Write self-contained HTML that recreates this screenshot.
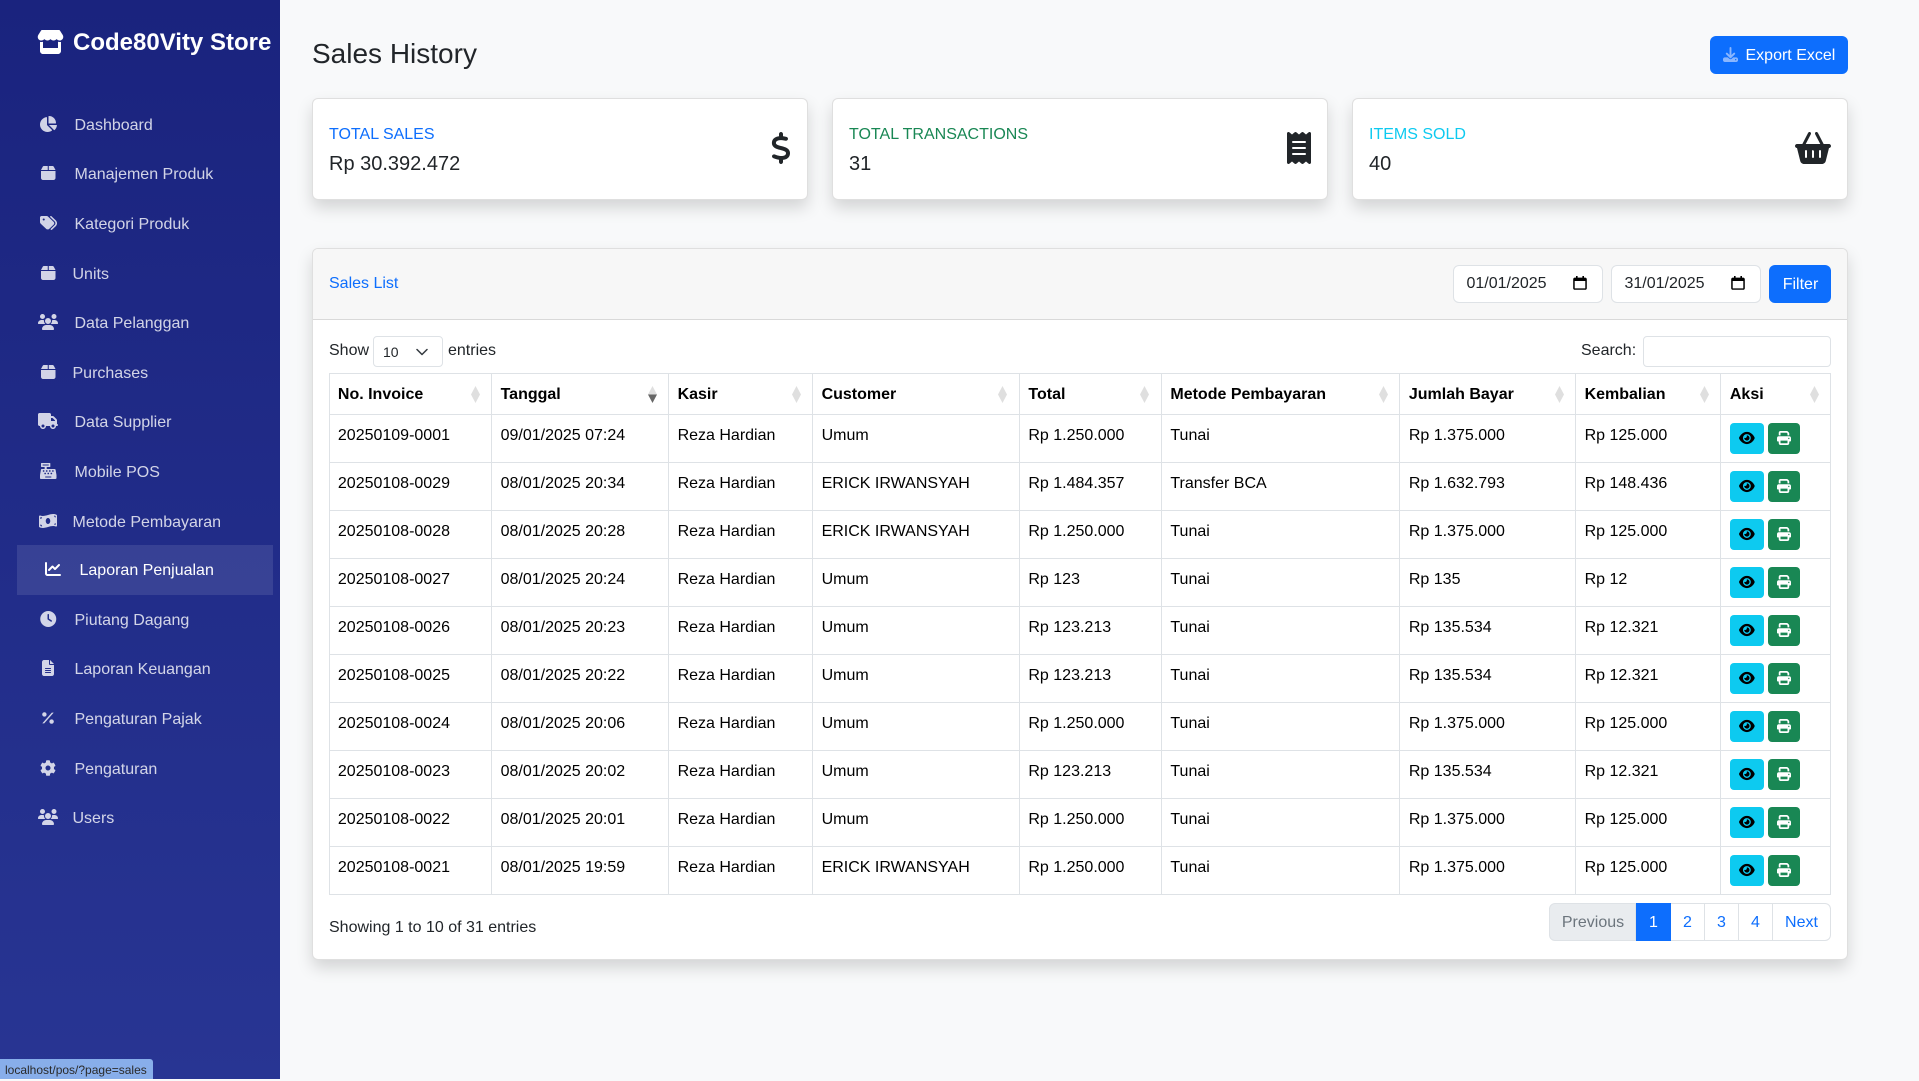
<!DOCTYPE html>
<html lang="id">
<head>
<meta charset="utf-8">
<title>Sales History</title>
<style>
*{box-sizing:border-box}
html,body{margin:0;padding:0;width:1919px;height:1079px;overflow:hidden;background:#f8f9fa;font-family:"Liberation Sans",Arial,sans-serif;font-size:16px;color:#212529}
.abs,.side a,.side svg,.t{position:absolute}
.t{white-space:nowrap;line-height:24px}
.side{position:absolute;left:0;top:0;width:280px;height:1079px;background:linear-gradient(180deg,#1a237e,#283593)}
.side a{left:0;white-space:nowrap;line-height:24px;color:rgba(255,255,255,.8);text-decoration:none}
.side svg{fill:rgba(255,255,255,.8)}
.active{position:absolute;left:17px;top:545px;width:256px;height:50px;background:rgba(255,255,255,.1)}
.card{position:absolute;background:#fff;border:1px solid rgba(0,0,0,.125);border-radius:6px;box-shadow:0 8px 16px rgba(0,0,0,.15)}
.ic{position:absolute;fill:#212529}
.btn{position:absolute;background:#0d6efd;color:#fff;border-radius:6px;line-height:24px}
.inp{position:absolute;background:#fff;border:1px solid #dee2e6;border-radius:6px}
table{position:absolute;left:328.5px;top:373px;width:1502px;table-layout:fixed;border-collapse:collapse;color:#000}
th,td{border:1px solid #dee2e6;padding:9px 8px 7px 8.4px;vertical-align:top;line-height:24px;text-align:left;white-space:nowrap;overflow:visible}
th{position:relative;font-weight:700;height:41px}
tbody tr{height:48px}
th svg{position:absolute;right:11.500px;top:12px;width:9px;height:17px}
td.a{padding:8px 0 8px 9px}
.b{display:inline-block;vertical-align:top;height:31px;border-radius:4px;position:relative}
.b svg{position:absolute}
.e{width:33.75px;background:#0dcaf0;margin-right:4.25px}
.e svg{left:9px;top:8px;width:15.750px;height:14px;fill:#000}
.p{width:32px;background:#198754}
.p svg{left:9px;top:8px;width:14px;height:14px;fill:#fff}
.pg{position:absolute;top:903px;height:38px;line-height:38px;text-align:center;color:#0d6efd;background:#fff;border:1px solid #dee2e6;border-left:0}
</style>
</head>
<body>
<svg width="0" height="0" style="position:absolute">
<defs>
<symbol id="eye" viewBox="0 0 576 512"><path d="M288 32c-80.800 0-145.500 36.800-192.600 80.600C48.600 156 17.300 208 2.500 243.700c-3.300 7.900-3.300 16.700 0 24.600C17.300 304 48.600 356 95.400 399.400C142.500 443.200 207.200 480 288 480s145.500-36.800 192.600-80.600c46.800-43.500 78.100-95.400 93-131.100c3.300-7.900 3.300-16.700 0-24.600c-14.900-35.700-46.200-87.700-93-131.100C433.500 68.800 368.800 32 288 32zM144 256a144 144 0 1 1 288 0 144 144 0 1 1 -288 0zm144-64c0 35.300-28.700 64-64 64c-7.100 0-13.900-1.200-20.300-3.300c-5.500-1.800-11.900 1.600-11.700 7.400c.3 6.900 1.300 13.800 3.200 20.700c13.700 51.200 66.400 81.600 117.600 67.900s81.600-66.400 67.900-117.600c-11.100-41.500-47.800-69.400-88.600-71.100c-5.800-.2-9.200 6.100-7.400 11.700c2.100 6.400 3.300 13.200 3.300 20.300z"/></symbol>
<symbol id="print" viewBox="0 0 512 512"><path d="M128 0C92.700 0 64 28.700 64 64v96h64V64H354.700L384 93.300V160h64V93.300c0-17-6.700-33.300-18.700-45.300L400 18.700C388 6.700 371.700 0 354.700 0H128zM384 352v32 64H128V384 368 352H384zm64 32h32c17.700 0 32-14.300 32-32V256c0-35.300-28.700-64-64-64H64c-35.300 0-64 28.700-64 64v96c0 17.700 14.300 32 32 32H64v64c0 35.300 28.700 64 64 64H384c35.300 0 64-28.700 64-64V384zM432 248a24 24 0 1 1 0 48 24 24 0 1 1 0-48z"/></symbol>
<symbol id="box" viewBox="0 32 448 448" preserveAspectRatio="none"><path d="M50.700 58.500L0 160H208V32H93.700C75.500 32 58.900 42.300 50.700 58.500zM240 160H448L397.300 58.500C389.100 42.300 372.500 32 354.300 32H240V160zm208 32H0V416c0 35.300 28.700 64 64 64H384c35.300 0 64-28.700 64-64V192z"/></symbol>
<symbol id="users" viewBox="0 0 640 512"><path d="M144 0a80 80 0 1 1 0 160A80 80 0 1 1 144 0zM512 0a80 80 0 1 1 0 160A80 80 0 1 1 512 0zM0 298.700C0 239.800 47.800 192 106.700 192h42.700c15.900 0 31 3.500 44.600 9.700c-1.300 7.200-1.900 14.700-1.900 22.300c0 38.200 16.800 72.500 43.300 96c-.2 0-.4 0-.7 0H21.300C9.600 320 0 310.400 0 298.700zM405.300 320c-.2 0-.4 0-.7 0c26.600-23.500 43.300-57.800 43.300-96c0-7.600-.7-15-1.900-22.300c13.600-6.300 28.700-9.700 44.600-9.700h42.700C592.200 192 640 239.800 640 298.700c0 11.800-9.600 21.300-21.300 21.300H405.300zM224 224a96 96 0 1 1 192 0 96 96 0 1 1 -192 0zM128 485.300C128 411.700 187.700 352 261.300 352H378.700C452.300 352 512 411.700 512 485.300c0 14.700-11.900 26.700-26.700 26.700H154.700c-14.700 0-26.700-11.900-26.700-26.700z"/></symbol>
</defs>
</svg>

<div class="side">
  <svg style="left:36.500px;top:30px;width:27px;height:24px;fill:#fff" viewBox="0 0 576 512"><path d="M547.600 103.800L490.300 13.100C485.200 5 476.100 0 466.400 0H109.600C99.900 0 90.800 5 85.700 13.100L28.300 103.800c-29.600 46.800-3.400 111.900 51.900 119.400c4 .5 8.100 .8 12.100 .8c26.100 0 49.300-11.400 65.200-29c15.900 17.600 39.100 29 65.200 29c26.100 0 49.300-11.400 65.200-29c15.900 17.600 39.100 29 65.200 29c26.200 0 49.300-11.400 65.200-29c16 17.600 39.100 29 65.200 29c4.100 0 8.100-.3 12.100-.8c55.500-7.400 81.800-72.500 52.100-119.400zM499.700 254.900l-.1 0c-5.300 .7-10.700 1.100-16.200 1.100c-12.400 0-24.300-1.900-35.400-5.300V384H128V250.600c-11.200 3.500-23.200 5.400-35.600 5.400c-5.500 0-11-.4-16.300-1.100l-.1 0c-4.100-.6-8.100-1.300-12-2.300V384v64c0 35.300 28.700 64 64 64H448c35.300 0 64-28.700 64-64V384 252.600c-4 1-8 1.800-12.300 2.300z"/></svg>
  <div class="t" style="left:73px;top:29px;line-height:28px;font-size:24px;font-weight:700;color:#fff">Code80Vity Store</div>

  <div class="active"></div>

  <svg style="left:40px;top:116px;width:17px;height:16px" viewBox="32 0 544 512"><path d="M304 240V16.600c0-9 7-16.600 16-16.600C443.700 0 544 100.300 544 224c0 9-7.600 16-16.600 16H304zM32 272C32 150.700 122.100 50.300 239 34.300c9.200-1.300 17 6.100 17 15.400V288L412.500 444.500c6.700 6.700 6.200 17.700-1.500 23.100C371.800 495.600 323.800 512 272 512C139.500 512 32 404.600 32 272zm526.400 16c9.300 0 16.600 7.800 15.400 17c-7.700 55.900-34.600 105.600-73.900 142.300c-6 5.600-15.400 5.200-21.200-.7L320 288H558.400z"/></svg>
  <a style="left:74.500px;top:114px">Dashboard</a>

  <svg style="left:41px;top:166px;width:14.500px;height:14px"><use href="#box" width="14.500" height="14"/></svg>
  <a style="left:74.500px;top:163px">Manajemen Produk</a>

  <svg style="left:40px;top:216px;width:17px;height:14px" viewBox="0 32 512 448" preserveAspectRatio="none"><path d="M345 39.100L472.800 168.400c52.400 53 52.400 138.200 0 191.200L360.800 472.900c-9.300 9.400-24.500 9.500-33.900 .2s-9.500-24.500-.2-33.900L438.600 325.900c33.900-34.300 33.900-89.400 0-123.700L310.900 72.900c-9.300-9.400-9.200-24.600 .2-33.900s24.600-9.200 33.900 .2zM0 229.500V80C0 53.500 21.500 32 48 32H197.500c17 0 33.300 6.700 45.300 18.700l168 168c25 25 25 65.500 0 90.500L277.300 442.700c-25 25-65.500 25-90.500 0l-168-168C6.700 262.700 0 246.500 0 229.500zM144 144a32 32 0 1 0 -64 0 32 32 0 1 0 64 0z"/></svg>
  <a style="left:74.500px;top:213px">Kategori Produk</a>

  <svg style="left:41px;top:266px;width:14.500px;height:14px"><use href="#box" width="14.500" height="14"/></svg>
  <a style="left:72.500px;top:263px">Units</a>

  <svg style="left:38px;top:314px;width:20px;height:16px"><use href="#users" width="20" height="16"/></svg>
  <a style="left:74.500px;top:312px">Data Pelanggan</a>

  <svg style="left:41px;top:365px;width:14.500px;height:14px"><use href="#box" width="14.500" height="14"/></svg>
  <a style="left:72.500px;top:362px">Purchases</a>

  <svg style="left:38px;top:413px;width:20px;height:16px" viewBox="0 0 640 512"><path d="M48 0C21.500 0 0 21.500 0 48V368c0 26.500 21.500 48 48 48H64c0 53 43 96 96 96s96-43 96-96H384c0 53 43 96 96 96s96-43 96-96h32c17.700 0 32-14.300 32-32s-14.300-32-32-32V288 256 237.300c0-17-6.700-33.300-18.700-45.300L512 114.700c-12-12-28.300-18.700-45.300-18.700H416V48c0-26.500-21.500-48-48-48H48zM416 160h50.700L544 237.300V256H416V160zM112 416a48 48 0 1 1 96 0 48 48 0 1 1 -96 0zm368-48a48 48 0 1 1 0 96 48 48 0 1 1 0-96z"/></svg>
  <a style="left:74.500px;top:411px">Data Supplier</a>

  <svg style="left:40px;top:463px;width:16.500px;height:16px" viewBox="0 0 512 512" preserveAspectRatio="none"><path d="M511.100 378.800l-26.700-160c-2.600-15.400-15.900-26.700-31.600-26.700H208v-64h96c8.800 0 16-7.200 16-16V16c0-8.800-7.200-16-16-16H48c-8.800 0-16 7.200-16 16v96c0 8.800 7.200 16 16 16h96v64H59.100c-15.600 0-29 11.300-31.600 26.700L.8 378.700c-.6 3.500-.9 7-.9 10.500V480c0 17.700 14.300 32 32 32h448c17.700 0 32-14.300 32-32v-90.700c.1-3.500-.2-7-.8-10.500zM280 248c0-8.800 7.200-16 16-16h16c8.800 0 16 7.200 16 16v16c0 8.800-7.200 16-16 16h-16c-8.800 0-16-7.200-16-16v-16zm-32 64h16c8.800 0 16 7.200 16 16v16c0 8.800-7.200 16-16 16h-16c-8.800 0-16-7.200-16-16v-16c0-8.800 7.200-16 16-16zm-32-80c8.800 0 16 7.200 16 16v16c0 8.800-7.200 16-16 16h-16c-8.800 0-16-7.200-16-16v-16c0-8.800 7.200-16 16-16h16zM80 80V48h192v32H80zm40 200h-16c-8.800 0-16-7.200-16-16v-16c0-8.800 7.200-16 16-16h16c8.800 0 16 7.200 16 16v16c0 8.800-7.200 16-16 16zm16 64v-16c0-8.800 7.200-16 16-16h16c8.800 0 16 7.200 16 16v16c0 8.800-7.200 16-16 16h-16c-8.800 0-16-7.200-16-16zm216 112c0 4.400-3.600 8-8 8H168c-4.400 0-8-3.600-8-8v-16c0-4.400 3.600-8 8-8h176c4.400 0 8 3.600 8 8v16zm24-112c0 8.800-7.200 16-16 16h-16c-8.800 0-16-7.200-16-16v-16c0-8.800 7.200-16 16-16h16c8.800 0 16 7.200 16 16v16zm48-80c0 8.800-7.200 16-16 16h-16c-8.800 0-16-7.200-16-16v-16c0-8.800 7.200-16 16-16h16c8.800 0 16 7.200 16 16v16z"/></svg>
  <a style="left:74.500px;top:461px">Mobile POS</a>

  <svg style="left:39px;top:514px;width:18px;height:14px" viewBox="0 32 640 448" preserveAspectRatio="none"><path d="M621.160 54.460C582.370 38.190 543.550 32 504.750 32c-123.170-.01-246.330 62.340-369.500 62.340-30.890 0-61.760-3.920-92.650-13.720-3.470-1.100-6.950-1.620-10.350-1.620C15.040 79 0 92.320 0 110.810v317.260c0 12.630 7.230 24.600 18.840 29.460C57.630 473.810 96.450 480 135.250 480c123.170 0 246.340-62.350 369.510-62.350 30.890 0 61.760 3.920 92.650 13.720 3.470 1.100 6.950 1.620 10.350 1.620 17.210 0 32.250-13.320 32.250-31.810V83.930c-.01-12.640-7.240-24.600-18.850-29.470zM48 132.220c20.120 5.040 41.120 7.570 62.720 8.930C104.840 170.540 79 192.690 48 192.690v-60.470zm0 285v-47.780c34.370 0 62.180 27.270 63.710 61.400-22.530-1.810-43.590-6.310-63.710-13.620zM320 352c-44.190 0-80-42.990-80-96 0-53.020 35.820-96 80-96s80 42.980 80 96c0 53.030-35.830 96-80 96zm272 27.780c-17.520-4.390-35.710-6.850-54.320-8.440 5.870-26.080 27.500-45.880 54.320-49.280v57.720zm0-236.110c-30.890-3.910-54.860-29.700-55.810-61.550 19.540 2.170 38.090 6.230 55.810 12.660v48.890z"/></svg>
  <a style="left:72.500px;top:511px">Metode Pembayaran</a>

  <svg style="left:45px;top:562px;width:16px;height:14px;fill:#fff" viewBox="0 32 512 448" preserveAspectRatio="none"><path d="M64 64c0-17.700-14.300-32-32-32S0 46.300 0 64V400c0 44.200 35.800 80 80 80H480c17.700 0 32-14.300 32-32s-14.300-32-32-32H80c-8.800 0-16-7.200-16-16V64zm406.600 86.600c12.500-12.500 12.500-32.800 0-45.300s-32.800-12.500-45.300 0L320 210.700l-57.400-57.400c-12.500-12.500-32.800-12.500-45.300 0l-112 112c-12.500 12.500-12.500 32.800 0 45.300s32.800 12.500 45.300 0l89.400-89.300 57.400 57.400c12.500 12.500 32.800 12.500 45.300 0l128-128z"/></svg>
  <a style="left:79.500px;top:559px;color:#fff">Laporan Penjualan</a>

  <svg style="left:40px;top:611px;width:16.500px;height:16px" viewBox="0 0 512 512"><path d="M256 0a256 256 0 1 1 0 512A256 256 0 1 1 256 0zM232 120V256c0 8 4 15.500 10.700 20l96 64c11 7.400 25.900 4.400 33.300-6.700s4.400-25.900-6.700-33.300L280 243.200V120c0-13.300-10.700-24-24-24s-24 10.700-24 24z"/></svg>
  <a style="left:74.500px;top:609px">Piutang Dagang</a>

  <svg style="left:42px;top:660px;width:12px;height:16px" viewBox="0 0 384 512"><path d="M64 0C28.700 0 0 28.700 0 64V448c0 35.300 28.700 64 64 64H320c35.300 0 64-28.700 64-64V160H256c-17.700 0-32-14.300-32-32V0H64zM256 0V128H384L256 0zM112 256H272c8.800 0 16 7.200 16 16s-7.200 16-16 16H112c-8.800 0-16-7.200-16-16s7.200-16 16-16zm0 64H272c8.800 0 16 7.200 16 16s-7.200 16-16 16H112c-8.800 0-16-7.200-16-16s7.200-16 16-16zm0 64H272c8.800 0 16 7.200 16 16s-7.200 16-16 16H112c-8.800 0-16-7.200-16-16s7.200-16 16-16z"/></svg>
  <a style="left:74.500px;top:658px">Laporan Keuangan</a>

  <svg style="left:42px;top:712px;width:12px;height:12px" viewBox="0 0 12 12"><path d="M9.800 .6h1.900L2.200 11.400H.3z"/><circle cx="2.400" cy="2.400" r="2.200"/><circle cx="9.600" cy="9.600" r="2.200"/></svg>
  <a style="left:74.500px;top:708px">Pengaturan Pajak</a>

  <svg style="left:40px;top:760px;width:16px;height:16px" viewBox="0 0 512 512"><path d="M487.400 315.700l-42.600-24.600c4.300-23.200 4.300-47 0-70.200l42.600-24.600c4.900-2.800 7.100-8.600 5.500-14-11.100-35.600-30-67.800-54.700-94.600-3.800-4.100-10-5.100-14.800-2.300L380.800 110c-17.900-15.400-38.500-27.300-60.800-35.100V25.800c0-5.600-3.900-10.500-9.400-11.700-36.700-8.200-74.300-7.800-109.200 0-5.500 1.200-9.400 6.100-9.400 11.700V75c-22.200 7.900-42.800 19.800-60.800 35.100L88.700 85.500c-4.900-2.800-11-1.900-14.800 2.300-24.700 26.700-43.600 58.900-54.700 94.600-1.700 5.400.6 11.200 5.500 14L67.300 221c-4.300 23.200-4.300 47 0 70.200l-42.600 24.600c-4.900 2.800-7.100 8.600-5.500 14 11.100 35.600 30 67.800 54.700 94.600 3.800 4.100 10 5.100 14.800 2.300l42.600-24.600c17.900 15.400 38.500 27.300 60.800 35.100v49.200c0 5.600 3.900 10.500 9.400 11.700 36.700 8.200 74.300 7.800 109.200 0 5.500-1.200 9.400-6.100 9.400-11.700v-49.200c22.200-7.900 42.800-19.800 60.800-35.100l42.600 24.600c4.900 2.800 11 1.900 14.800-2.300 24.700-26.700 43.600-58.900 54.700-94.600 1.500-5.500-.7-11.300-5.600-14.100zM256 336c-44.100 0-80-35.900-80-80s35.900-80 80-80 80 35.900 80 80-35.900 80-80 80z"/></svg>
  <a style="left:74.500px;top:758px">Pengaturan</a>

  <svg style="left:38px;top:809px;width:20px;height:16px"><use href="#users" width="20" height="16"/></svg>
  <a style="left:72.500px;top:807px">Users</a>
</div>

<div class="t" style="left:312px;top:37px;font-size:28px;line-height:34px;color:#212529">Sales History</div>

<div class="btn" style="left:1710px;top:36px;width:137.500px;height:38px">
  <svg class="abs" style="left:13px;top:11px;width:15px;height:15px;fill:#8ab6fe" viewBox="0 0 512 512"><path d="M288 32c0-17.700-14.300-32-32-32s-32 14.300-32 32V274.700l-73.400-73.400c-12.500-12.500-32.800-12.500-45.300 0s-12.500 32.800 0 45.300l128 128c12.500 12.500 32.800 12.500 45.300 0l128-128c12.500-12.500 12.500-32.800 0-45.300s-32.800-12.500-45.300 0L288 274.700V32zM64 352c-35.300 0-64 28.700-64 64v32c0 35.300 28.700 64 64 64H448c35.300 0 64-28.700 64-64V416c0-35.300-28.700-64-64-64H346.500l-45.300 45.300c-25 25-65.500 25-90.500 0L165.500 352H64zm368 56a24 24 0 1 1 0 48 24 24 0 1 1 0-48z"/></svg>
  <span class="t" style="left:35.500px;top:8px;color:#fff">Export Excel</span>
</div>

<div class="card" style="left:312px;top:98px;width:496px;height:102px"></div>
<div class="t" style="left:329px;top:123px;color:#0d6efd">TOTAL SALES</div>
<div class="t" style="left:329px;top:151.500px;font-size:20px;color:#212529">Rp 30.392.472</div>
<svg class="ic" style="left:770.500px;top:132px;width:20px;height:32px" viewBox="0 0 320 512"><path d="M160 0c17.700 0 32 14.300 32 32V67.700c1.600 .2 3.100 .4 4.700 .7c.4 .1 .7 .1 1.100 .2l48 8.800c17.400 3.200 28.900 19.900 25.700 37.200s-19.900 28.900-37.200 25.700l-47.500-8.700c-31.300-4.600-58.900-1.500-78.300 6.200s-27.200 18.300-29 28.100c-2 10.700-.5 16.700 1.200 20.400c1.800 3.900 5.500 8.300 12.800 13.200c16.300 10.700 41.300 17.700 73.700 26.300l2.900 .8c28.600 7.600 63.600 16.800 89.600 33.800c14.200 9.300 27.600 21.900 35.900 39.500c8.500 17.900 10.300 37.900 6.400 59.200c-6.900 38-33.100 63.400-65.600 76.700c-13.700 5.600-28.600 9.200-44.400 11V480c0 17.700-14.300 32-32 32s-32-14.300-32-32V445.100c-.4-.1-.9-.1-1.300-.2l-.2 0 0 0c-24.400-3.800-64.500-14.300-91.500-26.300c-16.100-7.200-23.400-26.100-16.200-42.200s26.100-23.400 42.200-16.200c20.900 9.300 55.300 18.500 75.200 21.600c31.900 4.700 58.200 2 76-5.300c16.900-6.900 24.600-16.900 26.800-28.900c1.900-10.600 .4-16.700-1.300-20.400c-1.900-4-5.600-8.400-13-13.300c-16.400-10.700-41.500-17.700-74-26.300l-2.800-.7 0 0C119.400 279.300 84.400 270 58.400 253c-14.200-9.300-27.500-22-35.800-39.600c-8.400-17.900-10.100-37.900-6.100-59.200C23.700 116 52.300 91.200 84.800 78.300c13.300-5.300 27.900-8.900 43.200-11V32c0-17.700 14.300-32 32-32z"/></svg>

<div class="card" style="left:832px;top:98px;width:496px;height:102px"></div>
<div class="t" style="left:849px;top:123px;color:#198754">TOTAL TRANSACTIONS</div>
<div class="t" style="left:849px;top:151.500px;font-size:20px;color:#212529">31</div>
<svg class="ic" style="left:1287px;top:132px;width:24px;height:32px" viewBox="0 0 384 512"><path d="M14 2.200C22.500-1.700 32.500-.3 39.600 5.800L80 40.400 120.400 5.800c9-7.700 22.300-7.700 31.200 0L192 40.400 232.400 5.800c9-7.700 22.300-7.700 31.200 0L304 40.400 344.400 5.800c7.100-6.100 17.100-7.500 25.600-3.600s14 12.400 14 21.800V488c0 9.400-5.500 17.900-14 21.800s-18.500 2.500-25.600-3.600L304 471.600l-40.400 34.600c-9 7.700-22.300 7.700-31.200 0L192 471.600l-40.400 34.600c-9 7.700-22.300 7.700-31.200 0L80 471.600 39.600 506.200c-7.100 6.100-17.100 7.500-25.600 3.600S0 497.400 0 488V24C0 14.600 5.500 6.100 14 2.200zM96 144c-8.800 0-16 7.200-16 16s7.200 16 16 16H288c8.800 0 16-7.200 16-16s-7.200-16-16-16H96zM80 352c0 8.800 7.200 16 16 16H288c8.800 0 16-7.200 16-16s-7.200-16-16-16H96c-8.800 0-16 7.200-16 16zM96 240c-8.800 0-16 7.200-16 16s7.200 16 16 16H288c8.800 0 16-7.200 16-16s-7.200-16-16-16H96z"/></svg>

<div class="card" style="left:1352px;top:98px;width:496px;height:102px"></div>
<div class="t" style="left:1369px;top:123px;color:#0dcaf0">ITEMS SOLD</div>
<div class="t" style="left:1369px;top:151.500px;font-size:20px;color:#212529">40</div>
<svg class="ic" style="left:1795px;top:132px;width:36px;height:32px" viewBox="0 0 576 512"><path d="M253.300 35.100c6.100-11.800 1.500-26.300-10.200-32.400s-26.300-1.500-32.400 10.200L117.600 192H32c-17.700 0-32 14.300-32 32s14.300 32 32 32L83.900 463.500C91 492 116.600 512 146 512H430c29.400 0 55-20 62.100-48.500L544 256c17.700 0 32-14.300 32-32s-14.300-32-32-32H458.400L365.300 12.900C359.200 1.200 344.700-3.400 332.900 2.700s-16.300 20.600-10.200 32.400L404.300 192H171.700L253.300 35.100zM192 304v96c0 8.800-7.200 16-16 16s-16-7.200-16-16V304c0-8.800 7.200-16 16-16s16 7.200 16 16zm96-16c8.800 0 16 7.200 16 16v96c0 8.800-7.200 16-16 16s-16-7.200-16-16V304c0-8.800 7.200-16 16-16s16 7.200 16 16zm128 16v96c0 8.800-7.200 16-16 16s-16-7.200-16-16V304c0-8.800 7.200-16 16-16s16 7.200 16 16z"/></svg>

<div class="card" style="left:312px;top:248px;width:1536px;height:712px"></div>
<div class="abs" style="left:313px;top:249px;width:1534px;height:71px;background:#f7f7f7;border-bottom:1px solid #d9d9d9;border-radius:5px 5px 0 0"></div>
<div class="t" style="left:329px;top:272px;color:#0d6efd">Sales List</div>

<div class="inp" style="left:1453px;top:265px;width:150px;height:38px"></div>
<div class="t" style="left:1466.500px;top:272px;color:#212529">01/01/2025</div>
<svg class="abs" style="left:1573px;top:276px;width:14px;height:14px" viewBox="0 0 14 14"><path fill="#000" d="M3 0h1.600v1.600h4.800V0H11v1.600h1.200c.9 0 1.600.7 1.600 1.600v9c0 .9-.7 1.600-1.600 1.600H1.800C.9 13.800.2 13.100.2 12.200v-9c0-.9.700-1.600 1.600-1.600H3zM1.700 5v7.400c0 0 0 0 .1 0h10.400c.1 0 .1 0 .1 0V5z"/></svg>

<div class="inp" style="left:1611px;top:265px;width:150px;height:38px"></div>
<div class="t" style="left:1624.500px;top:272px;color:#212529">31/01/2025</div>
<svg class="abs" style="left:1731px;top:276px;width:14px;height:14px" viewBox="0 0 14 14"><path fill="#000" d="M3 0h1.600v1.600h4.800V0H11v1.600h1.200c.9 0 1.600.7 1.600 1.600v9c0 .9-.7 1.600-1.600 1.600H1.800C.9 13.800.2 13.100.2 12.200v-9c0-.9.700-1.600 1.600-1.600H3zM1.700 5v7.400c0 0 0 0 .1 0h10.400c.1 0 .1 0 .1 0V5z"/></svg>

<div class="btn" style="left:1769px;top:265px;width:62px;height:38px;text-align:center;line-height:39px;padding-left:1px">Filter</div>

<div class="t" style="left:329px;top:339px">Show</div>
<div class="inp" style="left:373px;top:336px;width:70px;height:31px;border-radius:4px"></div>
<div class="t" style="left:383px;top:340px;font-size:14px">10</div>
<svg class="abs" style="left:416px;top:348px;width:12px;height:8px" viewBox="0 0 12 8"><path d="M1 1.500l5 5 5-5" fill="none" stroke="#343a40" stroke-width="1.500" stroke-linecap="round" stroke-linejoin="round"/></svg>
<div class="t" style="left:448px;top:339px">entries</div>

<div class="t" style="left:1581px;top:339px">Search:</div>
<div class="inp" style="left:1643px;top:336px;width:188px;height:31px;border-radius:4px"></div>

<table>
<colgroup>
<col style="width:162.700px"><col style="width:177px"><col style="width:144px"><col style="width:206.800px"><col style="width:142px"><col style="width:238.500px"><col style="width:175.700px"><col style="width:145.300px"><col style="width:110px">
</colgroup>
<thead>
<tr>
<th>No. Invoice<svg viewBox="0 0 9 17"><path fill="#dfdfdf" d="M4.500 0L9 8.500 4.500 17 0 8.500z"/></svg></th>
<th>Tanggal<svg viewBox="0 0 9 17"><path fill="#dfdfdf" d="M4.500 0L9 8.500H0z"/><path fill="#666" d="M0 8.500h9L4.500 17z"/></svg></th>
<th>Kasir<svg viewBox="0 0 9 17"><path fill="#dfdfdf" d="M4.500 0L9 8.500 4.500 17 0 8.500z"/></svg></th>
<th>Customer<svg viewBox="0 0 9 17"><path fill="#dfdfdf" d="M4.500 0L9 8.500 4.500 17 0 8.500z"/></svg></th>
<th>Total<svg viewBox="0 0 9 17"><path fill="#dfdfdf" d="M4.500 0L9 8.500 4.500 17 0 8.500z"/></svg></th>
<th>Metode Pembayaran<svg viewBox="0 0 9 17"><path fill="#dfdfdf" d="M4.500 0L9 8.500 4.500 17 0 8.500z"/></svg></th>
<th>Jumlah Bayar<svg viewBox="0 0 9 17"><path fill="#dfdfdf" d="M4.500 0L9 8.500 4.500 17 0 8.500z"/></svg></th>
<th>Kembalian<svg viewBox="0 0 9 17"><path fill="#dfdfdf" d="M4.500 0L9 8.500 4.500 17 0 8.500z"/></svg></th>
<th>Aksi<svg viewBox="0 0 9 17"><path fill="#dfdfdf" d="M4.500 0L9 8.500 4.500 17 0 8.500z"/></svg></th>
</tr>
</thead>
<tbody>
<tr><td>20250109-0001</td><td>09/01/2025 07:24</td><td>Reza Hardian</td><td>Umum</td><td>Rp 1.250.000</td><td>Tunai</td><td>Rp 1.375.000</td><td>Rp 125.000</td><td class="a"><span class="b e"><svg><use href="#eye"/></svg></span><span class="b p"><svg><use href="#print"/></svg></span></td></tr>
<tr><td>20250108-0029</td><td>08/01/2025 20:34</td><td>Reza Hardian</td><td>ERICK IRWANSYAH</td><td>Rp 1.484.357</td><td>Transfer BCA</td><td>Rp 1.632.793</td><td>Rp 148.436</td><td class="a"><span class="b e"><svg><use href="#eye"/></svg></span><span class="b p"><svg><use href="#print"/></svg></span></td></tr>
<tr><td>20250108-0028</td><td>08/01/2025 20:28</td><td>Reza Hardian</td><td>ERICK IRWANSYAH</td><td>Rp 1.250.000</td><td>Tunai</td><td>Rp 1.375.000</td><td>Rp 125.000</td><td class="a"><span class="b e"><svg><use href="#eye"/></svg></span><span class="b p"><svg><use href="#print"/></svg></span></td></tr>
<tr><td>20250108-0027</td><td>08/01/2025 20:24</td><td>Reza Hardian</td><td>Umum</td><td>Rp 123</td><td>Tunai</td><td>Rp 135</td><td>Rp 12</td><td class="a"><span class="b e"><svg><use href="#eye"/></svg></span><span class="b p"><svg><use href="#print"/></svg></span></td></tr>
<tr><td>20250108-0026</td><td>08/01/2025 20:23</td><td>Reza Hardian</td><td>Umum</td><td>Rp 123.213</td><td>Tunai</td><td>Rp 135.534</td><td>Rp 12.321</td><td class="a"><span class="b e"><svg><use href="#eye"/></svg></span><span class="b p"><svg><use href="#print"/></svg></span></td></tr>
<tr><td>20250108-0025</td><td>08/01/2025 20:22</td><td>Reza Hardian</td><td>Umum</td><td>Rp 123.213</td><td>Tunai</td><td>Rp 135.534</td><td>Rp 12.321</td><td class="a"><span class="b e"><svg><use href="#eye"/></svg></span><span class="b p"><svg><use href="#print"/></svg></span></td></tr>
<tr><td>20250108-0024</td><td>08/01/2025 20:06</td><td>Reza Hardian</td><td>Umum</td><td>Rp 1.250.000</td><td>Tunai</td><td>Rp 1.375.000</td><td>Rp 125.000</td><td class="a"><span class="b e"><svg><use href="#eye"/></svg></span><span class="b p"><svg><use href="#print"/></svg></span></td></tr>
<tr><td>20250108-0023</td><td>08/01/2025 20:02</td><td>Reza Hardian</td><td>Umum</td><td>Rp 123.213</td><td>Tunai</td><td>Rp 135.534</td><td>Rp 12.321</td><td class="a"><span class="b e"><svg><use href="#eye"/></svg></span><span class="b p"><svg><use href="#print"/></svg></span></td></tr>
<tr><td>20250108-0022</td><td>08/01/2025 20:01</td><td>Reza Hardian</td><td>Umum</td><td>Rp 1.250.000</td><td>Tunai</td><td>Rp 1.375.000</td><td>Rp 125.000</td><td class="a"><span class="b e"><svg><use href="#eye"/></svg></span><span class="b p"><svg><use href="#print"/></svg></span></td></tr>
<tr><td>20250108-0021</td><td>08/01/2025 19:59</td><td>Reza Hardian</td><td>ERICK IRWANSYAH</td><td>Rp 1.250.000</td><td>Tunai</td><td>Rp 1.375.000</td><td>Rp 125.000</td><td class="a"><span class="b e"><svg><use href="#eye"/></svg></span><span class="b p"><svg><use href="#print"/></svg></span></td></tr>
</tbody>
</table>

<div class="t" style="left:329px;top:916px">Showing 1 to 10 of 31 entries</div>

<div class="pg" style="left:1549px;width:87px;background:#e9ecef;color:#6c757d;border-left:1px solid #dee2e6;border-radius:6px 0 0 6px;padding-left:1px">Previous</div>
<div class="pg" style="left:1636px;width:35px;background:#0d6efd;color:#fff;border-color:#0d6efd;padding-left:1px">1</div>
<div class="pg" style="left:1671px;width:34px">2</div>
<div class="pg" style="left:1705px;width:34px">3</div>
<div class="pg" style="left:1739px;width:34px">4</div>
<div class="pg" style="left:1773px;width:58px;border-radius:0 6px 6px 0">Next</div>

<div class="abs" style="left:0;top:1059px;width:153px;height:20px;background:#88aeea;border-radius:0 3px 0 0;font-size:12px;line-height:22px;padding-left:5px;color:#2a2a2a;white-space:nowrap">localhost/pos/?page=sales</div>
</body>
</html>
